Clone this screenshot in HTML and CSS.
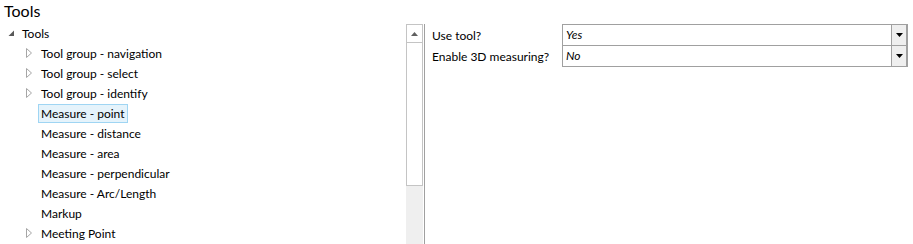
FILE: index.html
```html
<!DOCTYPE html>
<html lang="en">
<head>
  <meta charset="UTF-8">
  <title>Tools</title>
  <link rel="stylesheet" href="styles.css">
</head>
<body>
  <h1 class="title">Tools</h1>
  <div class="main">
    <div class="tree">
      <div class="row lvl0"><span class="exp"><svg width="7" height="7" viewBox="0 0 7 7"><path d="M6 0.5 L6 6 L0.5 6 Z" fill="#595959"/></svg></span><span class="lbl">Tools</span></div>
      <div class="row lvl1"><span class="exp"><svg width="7" height="10" viewBox="0 0 7 10"><path d="M0.5 0.5 L5.5 5 L0.5 9.5 Z" fill="none" stroke="#a6a6a6"/></svg></span><span class="lbl">Tool group - navigation</span></div>
      <div class="row lvl1"><span class="exp"><svg width="7" height="10" viewBox="0 0 7 10"><path d="M0.5 0.5 L5.5 5 L0.5 9.5 Z" fill="none" stroke="#a6a6a6"/></svg></span><span class="lbl">Tool group - select</span></div>
      <div class="row lvl1"><span class="exp"><svg width="7" height="10" viewBox="0 0 7 10"><path d="M0.5 0.5 L5.5 5 L0.5 9.5 Z" fill="none" stroke="#a6a6a6"/></svg></span><span class="lbl">Tool group - identify</span></div>
      <div class="row lvl1"><span class="exp"></span><span class="lbl selected">Measure - point</span></div>
      <div class="row lvl1"><span class="exp"></span><span class="lbl">Measure - distance</span></div>
      <div class="row lvl1"><span class="exp"></span><span class="lbl">Measure - area</span></div>
      <div class="row lvl1"><span class="exp"></span><span class="lbl">Measure - perpendicular</span></div>
      <div class="row lvl1"><span class="exp"></span><span class="lbl">Measure - Arc/Length</span></div>
      <div class="row lvl1"><span class="exp"></span><span class="lbl">Markup</span></div>
      <div class="row lvl1"><span class="exp"><svg width="7" height="10" viewBox="0 0 7 10"><path d="M0.5 0.5 L5.5 5 L0.5 9.5 Z" fill="none" stroke="#a6a6a6"/></svg></span><span class="lbl">Meeting Point</span></div>
    </div>
    <div class="scrollbar">
      <div class="sb-up"><svg width="7" height="4" viewBox="0 0 7 4"><path d="M3.5 0 L7 4 L0 4 Z" fill="#606060"/></svg></div>
      <div class="sb-thumb"></div>
      <div class="sb-track"></div>
    </div>
    <div class="props">
      <div class="prop">
        <span class="prop-name">Use tool?</span>
        <div class="combo"><span class="combo-val">Yes</span><span class="combo-btn"><svg width="7" height="4" viewBox="0 0 7 4"><path d="M0 0 L7 0 L3.5 4 Z" fill="#000"/></svg></span></div>
      </div>
      <div class="prop">
        <span class="prop-name">Enable 3D measuring?</span>
        <div class="combo"><span class="combo-val">No</span><span class="combo-btn"><svg width="7" height="4" viewBox="0 0 7 4"><path d="M0 0 L7 0 L3.5 4 Z" fill="#000"/></svg></span></div>
      </div>
    </div>
  </div>
</body>
</html>
```

FILE: styles.css
```css
body {
  margin: 0;
  background-color: white;
  font-family: Lato, "Noto Sans", sans-serif;
  font-size: 12px;
  color: #000;
}
.title {
  margin: 0;
  padding-left: 4px;
  height: 23px;
  line-height: 21px;
  font-size: 16px;
  font-weight: normal;
}
.main {
  display: flex;
  height: 221px;
}
.tree {
  width: 406px;
}
.row {
  display: flex;
  align-items: center;
  height: 20px;
  white-space: nowrap;
}
.lvl0 {
  padding-left: 3px;
}
.lvl1 {
  padding-left: 22px;
}
.exp {
  width: 19px;
  flex-shrink: 0;
  display: flex;
  align-items: center;
  padding-left: 4px;
  box-sizing: border-box;
}
.lvl0 .exp {
  padding-left: 5px;
}
.exp svg {
  display: block;
}
.lbl {
  line-height: 17px;
}
.selected {
  margin-left: -3px;
  padding: 0 2px;
  border: 1px solid #9fd5f3;
  background-color: #e5f3fb;
}
.scrollbar {
  width: 17px;
  margin-top: 1px;
  margin-right: 1px;
  display: flex;
  flex-direction: column;
  background-color: #efefef;
}
.sb-up {
  height: 19px;
  border: 1px solid #c4c4c4;
  background-color: #fff;
  display: flex;
  justify-content: center;
  padding-top: 7px;
  box-sizing: border-box;
}
.sb-up svg {
  display: block;
}
.sb-thumb {
  height: 143px;
  border: 1px solid #c4c4c4;
  border-top: none;
  background-color: #fff;
  box-sizing: border-box;
}
.sb-track {
  flex: 1;
}
.props {
  flex: 1;
  margin-top: 1px;
  border-left: 1px solid #a0a0a0;
  padding-left: 7px;
}
.prop {
  display: flex;
  align-items: center;
  height: 22px;
}
.prop + .prop {
  margin-top: -1px;
}
.prop-name {
  width: 130px;
}
.combo {
  width: 346px;
  height: 22px;
  box-sizing: border-box;
  border: 1px solid #a0a0a0;
  border-right-width: 2px;
  display: flex;
}
.combo-val {
  flex: 1;
  padding-left: 3px;
  font-style: italic;
  line-height: 19px;
}
.combo-btn {
  width: 14px;
  border-left: 1px solid #a0a0a0;
  background-color: #efefef;
  display: flex;
  align-items: center;
  justify-content: center;
}
.combo-btn svg {
  display: block;
}
```
